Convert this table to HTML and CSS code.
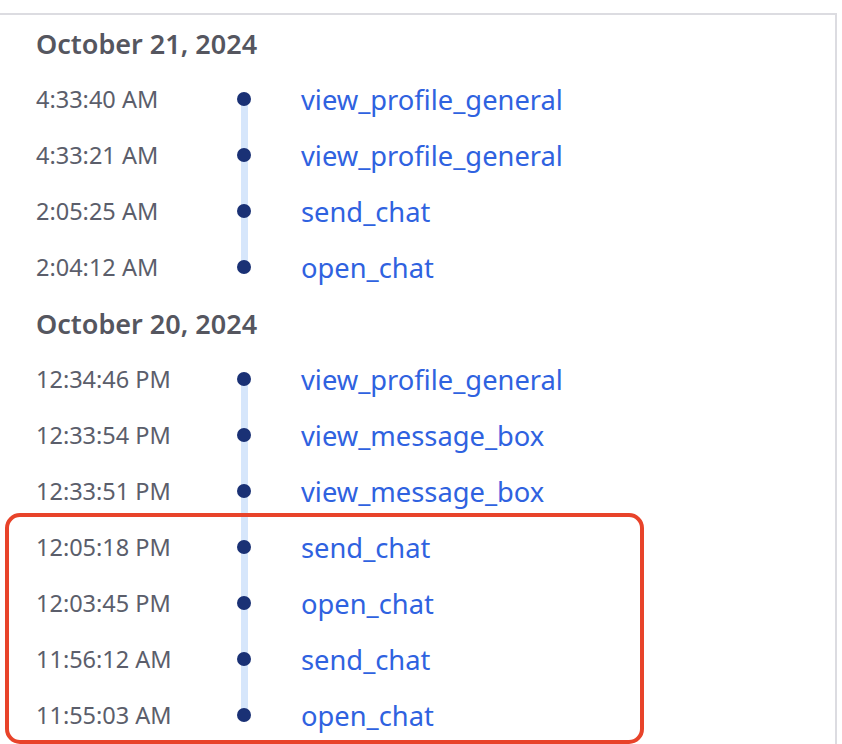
FILE: index.html
```html
<!DOCTYPE html>
<html lang="en">
<head>
  <meta charset="UTF-8">
  <title>Activity timeline</title>
  <link rel="stylesheet" href="styles.css">
</head>
<body>

<!-- Activity log -->
<div class="panel">
  <div class="day">
    <div class="day-title">October 21, 2024</div>
    <div class="events">
      <div class="event"><span class="time">4:33:40 AM</span><span class="dot"></span><a href="#">view_profile_general</a></div>
      <div class="event"><span class="time">4:33:21 AM</span><span class="dot"></span><a href="#">view_profile_general</a></div>
      <div class="event"><span class="time">2:05:25 AM</span><span class="dot"></span><a href="#">send_chat</a></div>
      <div class="event"><span class="time">2:04:12 AM</span><span class="dot"></span><a href="#">open_chat</a></div>
    </div>
  </div>

  <div class="day">
    <div class="day-title">October 20, 2024</div>
    <div class="events">
      <div class="event"><span class="time">12:34:46 PM</span><span class="dot"></span><a href="#">view_profile_general</a></div>
      <div class="event"><span class="time">12:33:54 PM</span><span class="dot"></span><a href="#">view_message_box</a></div>
      <div class="event"><span class="time">12:33:51 PM</span><span class="dot"></span><a href="#">view_message_box</a></div>
      <!-- flagged chat burst -->
      <div class="flagged">
        <div class="event"><span class="time">12:05:18 PM</span><span class="dot"></span><a href="#">send_chat</a></div>
        <div class="event"><span class="time">12:03:45 PM</span><span class="dot"></span><a href="#">open_chat</a></div>
        <div class="event"><span class="time">11:56:12 AM</span><span class="dot"></span><a href="#">send_chat</a></div>
        <div class="event"><span class="time">11:55:03 AM</span><span class="dot"></span><a href="#">open_chat</a></div>
      </div>
    </div>
  </div>
</div>

</body>
</html>
```

FILE: styles.css
```css
* {
  box-sizing: border-box;
}
body {
  margin: 0;
  font-family: 'Noto Sans', 'Liberation Sans', sans-serif;
  background: #fff;
  overflow: hidden;
}
.panel {
  margin-top: 13px;
  width: 837px;
  height: 740px;
  border-top: 2px solid #dcdce1;
  border-right: 2px solid #dcdce1;
  padding-left: 36px;
}
.day-title {
  height: 56px;
  display: flex;
  align-items: center;
  font-size: 27px;
  font-weight: 600;
  color: #55565f;
}
.events {
  position: relative;
}
.events::before {
  content: "";
  position: absolute;
  left: 205px;
  width: 7px;
  top: 28px;
  bottom: 28px;
  background: #d6e6fb;
}
.event {
  height: 56px;
  display: grid;
  grid-template-columns: 201px 64px 1fr;
  align-items: center;
  position: relative;
}
.time {
  font-size: 23.5px;
  color: #5b5e6b;
}
.dot {
  width: 14px;
  height: 14px;
  border-radius: 50%;
  background: #1a3175;
}
.event a {
  font-size: 27.3px;
  color: #2f62e0;
  text-decoration: none;
}
.flagged {
  position: relative;
}
.flagged::after {
  content: "";
  position: absolute;
  left: -31px;
  top: -6px;
  width: 631px;
  bottom: -1px;
  border: 4px solid #e8432a;
  border-radius: 15px;
}
```
